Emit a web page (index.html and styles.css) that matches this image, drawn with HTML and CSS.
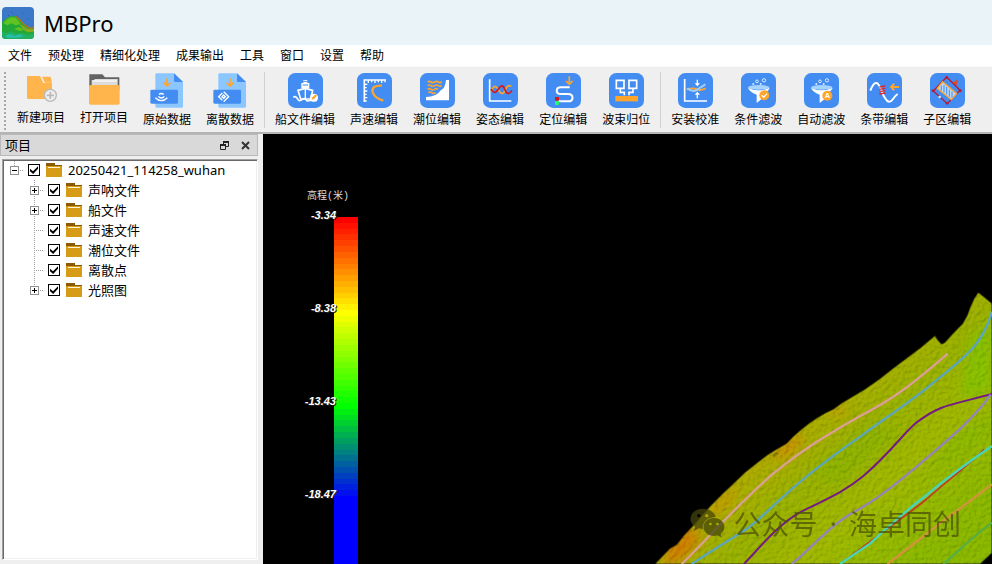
FILE: index.html
```html
<!DOCTYPE html>
<html lang="zh-CN">
<head>
<meta charset="utf-8">
<title>MBPro</title>
<link rel="stylesheet" href="styles.css">
</head>
<body>
<header class="titlebar">
  <svg class="app-icon" viewBox="0 0 96 96" aria-hidden="true">
    <defs><clipPath id="appclip"><rect width="96" height="96" rx="12"/></clipPath></defs>
    <g clip-path="url(#appclip)">
      <rect width="96" height="96" fill="#3c78c8"/>
      <path d="M28 14l3 3M60 16l3 3M44 26l3 3M78 34l3 3M18 24l3 3" stroke="#2a5ca6" stroke-width="3"/>
      <path d="M0 46L12 34 26 28 40 26 54 38 70 54 84 62 96 60V96H0z" fill="#22a836"/>
      <path d="M40 27L52 37 66 52 82 63 96 62" fill="none" stroke="#b87420" stroke-width="4"/>
      <path d="M4 48l12-12 12-5 10 0 10 8 8 12-14 4-14-6-12 6z" fill="#5fc421"/>
      <path d="M36 66l14-6 16 8-12 4z" fill="#5fc421"/>
      <path d="M52 50l14 8 12 8 18 0v8l-20 2-14-10z" fill="#86a91e"/>
      <path d="M0 74l14 4 16-6 14 8 20-2 12 6 20-6v18H0z" fill="#20b060"/>
      <path d="M10 86l14-5 14 6 14-5 14 6-22 4H16z" fill="#27bdb0"/>
    </g>
  </svg>
  <h1 class="app-name">MBPro</h1>
</header>

<nav class="menubar" aria-label="主菜单">
  <button class="menu">文件</button>
  <button class="menu">预处理</button>
  <button class="menu">精细化处理</button>
  <button class="menu">成果输出</button>
  <button class="menu">工具</button>
  <button class="menu">窗口</button>
  <button class="menu">设置</button>
  <button class="menu">帮助</button>
</nav>

<div class="toolbar" role="toolbar">
  <span class="grip"></span>
  <button class="tool tool-short">
    <svg class="tool-icon" viewBox="0 0 105 105" aria-hidden="true">
      <path d="M9 9H48L58 30H84V75a3 3 0 0 1-3 3H12a3 3 0 0 1-3-3z" fill="#ffb54c"/>
      <path d="M54 11H80L84 29H63z" fill="#ffb54c"/>
      <circle cx="79" cy="67" r="18" fill="#efefef" stroke="#b9b9b9" stroke-width="4"/>
      <path d="M79 56V78M68 67H90" stroke="#b9b9b9" stroke-width="5"/>
    </svg>
    新建项目
  </button>
  <button class="tool tool-short">
    <svg class="tool-icon" viewBox="0 0 105 105" aria-hidden="true">
      <path d="M7 4H46L54 13H97V50H7z" fill="#636363"/>
      <path d="M14 28L24 18H92V50H14z" fill="#dcdcdc"/>
      <path d="M14 24H90" stroke="#f5f5f5" stroke-width="5"/>
      <rect x="6" y="36" width="92" height="59" rx="5" fill="#ffb54c"/>
    </svg>
    打开项目
  </button>
  <button class="tool">
    <svg class="tool-icon" viewBox="0 0 105 105" aria-hidden="true">
      <path d="M20 1H72L99 27V100a4 4 0 0 1-4 4H20a4 4 0 0 1-4-4V5a4 4 0 0 1 4-4z" fill="#8cc6ff"/>
      <path d="M72 1L99 27H76a4 4 0 0 1-4-4z" fill="#438df2"/>
      <path d="M51 16V38M41 29L51 39 61 29" fill="none" stroke="#ffa52c" stroke-width="5"/>
      <rect x="1" y="50" width="83" height="42" rx="4" fill="#438df2"/>
      <path d="M27 64Q34 59 41 64M16 74Q34 92 52 74M25 70Q34 80 43 70" fill="none" stroke="#fff" stroke-width="4"/>
    </svg>
    原始数据
  </button>
  <button class="tool">
    <svg class="tool-icon" viewBox="0 0 105 105" aria-hidden="true">
      <path d="M20 1H72L99 27V100a4 4 0 0 1-4 4H20a4 4 0 0 1-4-4V5a4 4 0 0 1 4-4z" fill="#8cc6ff"/>
      <path d="M72 1L99 27H76a4 4 0 0 1-4-4z" fill="#438df2"/>
      <path d="M51 16V38M41 29L51 39 61 29" fill="none" stroke="#ffa52c" stroke-width="5"/>
      <rect x="1" y="50" width="83" height="42" rx="4" fill="#438df2"/>
      <path d="M28 60L17 71 28 82M36 60L47 71 36 82M32 56l5 5M32 86l5-5M32 66l5 5-5 5-5-5z" fill="none" stroke="#fff" stroke-width="4"/>
    </svg>
    离散数据
  </button>
  <span class="sep"></span>
  <button class="tool">
    <svg class="tool-icon" viewBox="0 0 105 105" aria-hidden="true">
      <rect width="105" height="105" rx="22" fill="#438df2"/>
      <path d="M46 21H58V30H64V46H40V30H46z" fill="#fff"/>
      <path d="M44 36H60M45 25H59" stroke="#438df2" stroke-width="3"/>
      <path d="M30 52L52 46 74 52 68 78H38z" fill="none" stroke="#fff" stroke-width="5"/>
      <path d="M52 47V78" stroke="#fff" stroke-width="4"/>
      <path d="M16 73Q23 67 28 77T42 80 54 80 66 82H86" fill="none" stroke="#fff" stroke-width="5"/>
      <circle cx="78" cy="74" r="12" fill="#fff"/>
      <path d="M71 80l2-7 10-9 4 4-9 10z" fill="#ffa52c"/>
    </svg>
    船文件编辑
  </button>
  <button class="tool">
    <svg class="tool-icon" viewBox="0 0 105 105" aria-hidden="true">
      <rect width="105" height="105" rx="22" fill="#438df2"/>
      <path d="M22 87V21H87" fill="none" stroke="#fff" stroke-width="5"/>
      <path d="M34 22v8M44 22v6M54 22v8M64 22v6M74 22v8M84 22v6M23 34h8M23 44h6M23 54h8M23 64h6M23 74h8M23 84h6" stroke="#fff" stroke-width="4"/>
      <path d="M75 38Q42 36 47 58Q54 76 79 83" fill="none" stroke="#ffa52c" stroke-width="7"/>
    </svg>
    声速编辑
  </button>
  <button class="tool">
    <svg class="tool-icon" viewBox="0 0 105 105" aria-hidden="true">
      <rect width="105" height="105" rx="22" fill="#438df2"/>
      <path d="M18 72Q50 72 62 52Q76 46 78 21H87V82H18z" fill="#fff"/>
      <path d="M23 27q5-4 10 0t11 0 11 0 10-1M23 38q5-4 10 0t11 0 11 0 10-1M23 49q5-4 10 0t11 0 10 0M25 59q5-4 10 0t12 0" fill="none" stroke="#ffa52c" stroke-width="5"/>
    </svg>
    潮位编辑
  </button>
  <button class="tool">
    <svg class="tool-icon" viewBox="0 0 105 105" aria-hidden="true">
      <rect width="105" height="105" rx="22" fill="#438df2"/>
      <path d="M20 19V84H85" fill="none" stroke="#fff" stroke-width="5"/>
      <path d="M24 56Q34 28 46 50T66 52T85 40" fill="none" stroke="#ffa52c" stroke-width="5"/>
      <path d="M24 48Q34 68 46 48T66 50T87 52" fill="none" stroke="#d4181f" stroke-width="5"/>
    </svg>
    姿态编辑
  </button>
  <button class="tool">
    <svg class="tool-icon" viewBox="0 0 105 105" aria-hidden="true">
      <rect width="105" height="105" rx="22" fill="#438df2"/>
      <path d="M71 43H45C28 43 28 63 45 63H66C84 63 84 85 66 85H36" fill="none" stroke="#fff" stroke-width="6"/>
      <path d="M70 10V33M60 24L70 34 80 24" fill="none" stroke="#ffa52c" stroke-width="5"/>
      <rect x="27" y="72" width="12" height="11" fill="#d4181f"/>
      <rect x="27" y="84" width="12" height="12" fill="#28f07a"/>
    </svg>
    定位编辑
  </button>
  <button class="tool">
    <svg class="tool-icon" viewBox="0 0 105 105" aria-hidden="true">
      <rect width="105" height="105" rx="22" fill="#438df2"/>
      <path d="M22 22H45V46H22zM60 22H83V46H60zM34 46V58H46V67M72 46V58H60V67" fill="none" stroke="#fff" stroke-width="5"/>
      <rect x="19" y="69" width="68" height="16" fill="#ffa52c"/>
    </svg>
    波束归位
  </button>
  <span class="sep"></span>
  <button class="tool">
    <svg class="tool-icon" viewBox="0 0 105 105" aria-hidden="true">
      <rect width="105" height="105" rx="22" fill="#438df2"/>
      <path d="M20 18V84H87" fill="none" stroke="#fff" stroke-width="5"/>
      <path d="M26 50Q46 44 56 49T83 46" fill="none" stroke="#ffa52c" stroke-width="6"/>
      <path d="M28 46Q44 60 58 50T82 34" fill="none" stroke="#9ccfff" stroke-width="6"/>
      <path d="M58 20V34M58 76V62" stroke="#fff" stroke-width="4"/>
      <path d="M50 31H66L58 40zM50 65H66L58 56z" fill="#fff"/>
    </svg>
    安装校准
  </button>
  <button class="tool">
    <svg class="tool-icon" viewBox="0 0 105 105" aria-hidden="true">
      <rect width="105" height="105" rx="22" fill="#438df2"/>
      <path d="M21 44Q52 60 86 44Q82 56 62 65V78L47 90V65Q25 56 21 44z" fill="#fff"/>
      <ellipse cx="53" cy="43" rx="32" ry="7" fill="#a7d4ff"/>
      <circle cx="48" cy="25" r="4" fill="none" stroke="#d8ebff" stroke-width="3"/>
      <circle cx="69" cy="22" r="5" fill="none" stroke="#d8ebff" stroke-width="3"/>
      <circle cx="59" cy="33" r="3" fill="#d8ebff"/><circle cx="37" cy="33" r="3" fill="#d8ebff"/>
      <circle cx="70" cy="67" r="15" fill="#ffa52c"/>
      <path d="M62 67L68 73 78 62" fill="none" stroke="#fff" stroke-width="4"/>
    </svg>
    条件滤波
  </button>
  <button class="tool">
    <svg class="tool-icon" viewBox="0 0 105 105" aria-hidden="true">
      <rect width="105" height="105" rx="22" fill="#438df2"/>
      <path d="M21 44Q52 60 86 44Q82 56 62 65V78L47 90V65Q25 56 21 44z" fill="#fff"/>
      <ellipse cx="53" cy="43" rx="32" ry="7" fill="#a7d4ff"/>
      <circle cx="48" cy="25" r="4" fill="none" stroke="#d8ebff" stroke-width="3"/>
      <circle cx="69" cy="22" r="5" fill="none" stroke="#d8ebff" stroke-width="3"/>
      <circle cx="59" cy="33" r="3" fill="#d8ebff"/><circle cx="37" cy="33" r="3" fill="#d8ebff"/>
      <circle cx="70" cy="68" r="15" fill="#ffa52c"/>
      <text class="badge-letter" x="70" y="76" text-anchor="middle">A</text>
    </svg>
    自动滤波
  </button>
  <button class="tool">
    <svg class="tool-icon" viewBox="0 0 105 105" aria-hidden="true">
      <rect width="105" height="105" rx="22" fill="#438df2"/>
      <path d="M10 53Q23 20 34 34C44 44 44 62 54 75Q66 96 78 78Q84 68 92 63" fill="none" stroke="#fff" stroke-width="6"/>
      <path d="M37 42l18-3M37 49l18-3M37 56l18-3M37 63l18-3" stroke="#e0262a" stroke-width="4"/>
      <path d="M96 42H74M82 32L72 42 82 52" fill="none" stroke="#ffa52c" stroke-width="6"/>
    </svg>
    条带编辑
  </button>
  <button class="tool">
    <svg class="tool-icon" viewBox="0 0 105 105" aria-hidden="true">
      <rect width="105" height="105" rx="22" fill="#438df2"/>
      <path d="M50 12L90 52 52 92 10 54z" fill="none" stroke="#b51c30" stroke-width="4"/>
      <path d="M38 26L80 62 64 80 22 46z" fill="#b9d8fa" stroke="#ffa52c" stroke-width="4"/>
      <path d="M34 38V52M42 36V58M50 42V64M58 50V71M66 56V74" stroke="#438df2" stroke-width="3"/>
      <path d="M68 30L84 18 80 36z" fill="#e0462a"/>
      <path d="M50 8l5 5-5 5-5-5zM9 48l5 5-5 5-5-5zM91 48l5 5-5 5-5-5zM51 86l5 5-5 5-5-5z" fill="#b51c30"/>
      <circle cx="29" cy="72" r="4" fill="#cfe4fb"/>
    </svg>
    子区编辑
  </button>
</div>

<main class="workspace">
  <aside class="dock">
    <div class="dock-head">
      <h2 class="dock-title">项目</h2>
      <button class="dock-btn" aria-label="浮动">
        <svg viewBox="0 0 9 9"><path d="M3.500 3V1.500H8.500V5.500H6M.5 4.500H5.500V8.500H.5z" fill="none" stroke="#222"/><path d="M3 1H9M0 4H6" stroke="#222" stroke-width="2"/></svg>
      </button>
      <button class="dock-btn" aria-label="关闭">
        <svg viewBox="0 0 9 9"><path d="M1 1L8 8M8 1L1 8" stroke="#333" stroke-width="2"/></svg>
      </button>
    </div>
    <div class="tree">
      <div class="row root">
        <button class="twist open" aria-label="折叠"></button>
        <label class="node"><input type="checkbox" checked><span class="folder"></span>20250421_114258_wuhan</label>
      </div>
      <ul class="branch">
        <li class="row"><button class="twist" aria-label="展开"></button><label class="node"><input type="checkbox" checked><span class="folder"></span>声呐文件</label></li>
        <li class="row"><button class="twist" aria-label="展开"></button><label class="node"><input type="checkbox" checked><span class="folder"></span>船文件</label></li>
        <li class="row"><span class="leaf"></span><label class="node"><input type="checkbox" checked><span class="folder"></span>声速文件</label></li>
        <li class="row"><span class="leaf"></span><label class="node"><input type="checkbox" checked><span class="folder"></span>潮位文件</label></li>
        <li class="row"><span class="leaf"></span><label class="node"><input type="checkbox" checked><span class="folder"></span>离散点</label></li>
        <li class="row"><button class="twist" aria-label="展开"></button><label class="node"><input type="checkbox" checked><span class="folder"></span>光照图</label></li>
      </ul>
    </div>
  </aside>

  <section class="viewport">
    <svg class="terrain" viewBox="0 0 1026 852" aria-hidden="true">
      <defs>
        <clipPath id="land"><path d="M16 852L60 806 80 795 104 765 130 737 152 712 180 680 215 645 250 612 285 578 320 550 350 527 375 511 410 491 430 470 455 448 478 430 500 415 525 400 550 388 575 370 600 355 645 328 690 297 730 265 770 235 812 204 855 168 862 180 875 193 885 188 910 160 938 132 952 108 960 85 972 58 985 38 1005 54 1026 72V818L990 852z"/></clipPath>
        <linearGradient id="ground" x1="230" y1="560" x2="640" y2="1000" gradientUnits="userSpaceOnUse">
          <stop offset="0" stop-color="#b4a000"/><stop offset=".14" stop-color="#a8ac00"/><stop offset=".34" stop-color="#98b000"/><stop offset=".6" stop-color="#9fb600"/><stop offset="1" stop-color="#8ab600"/>
        </linearGradient>
        <filter id="soft" x="-50%" y="-50%" width="200%" height="200%"><feGaussianBlur stdDeviation="16"/></filter>
        <filter id="relief" x="0" y="0" width="100%" height="100%" color-interpolation-filters="sRGB">
          <feTurbulence type="fractalNoise" baseFrequency=".08" numOctaves="3" seed="8" result="n"/>
          <feDiffuseLighting in="n" surfaceScale="5" diffuseConstant=".6" lighting-color="#fff"><feDistantLight azimuth="225" elevation="58"/></feDiffuseLighting>
        </filter>
      </defs>
      <g clip-path="url(#land)">
        <rect width="1026" height="852" fill="url(#ground)"/>
        <g filter="url(#soft)">
          <ellipse cx="415" cy="502" rx="55" ry="20" fill="#c88f00" transform="rotate(-38 415 502)"/>
          <ellipse cx="562" cy="394" rx="24" ry="14" fill="#c29a00"/>
          <ellipse cx="95" cy="800" rx="70" ry="30" fill="#cc7b00" transform="rotate(-45 95 800)"/>
          <ellipse cx="215" cy="672" rx="60" ry="14" fill="#c29400" transform="rotate(-42 215 672)"/>
          <path d="M960 180L1026 120V330L930 360z" fill="#86bd00"/>
          <path d="M480 580L660 440 760 450 560 620z" fill="#8eb000"/>
          <path d="M900 480L1026 390V480L820 600z" fill="#8cb600"/>
        </g>
        <rect class="relief" width="1026" height="852" filter="url(#relief)"/>
        <path d="M370 530q8-14 14-8" stroke="#746e00" stroke-width="6" fill="none"/>
      </g>
      <g class="tracks">
        <path stroke="#d99f96" d="M95 852C180 770 255 680 370 580C450 515 520 470 640 403C740 350 790 310 893 221"/>
        <path stroke="#5ca5bd" d="M125 852C180 815 230 785 290 747C330 718 370 675 420 632C500 560 560 520 640 463C740 390 800 352 850 308C950 228 1000 190 1026 95"/>
        <path stroke="#741a85" stroke-width="6" d="M282 852C340 790 390 730 450 697C520 660 570 645 640 588C720 520 760 460 800 427C870 375 890 378 1026 342"/>
        <path stroke="#9484b8" d="M425 852C480 810 530 745 600 703C680 660 740 610 800 560C880 490 960 430 1022 344"/>
        <path stroke="#c33a24" stroke-width="5" d="M575 849L660 785C740 725 790 690 830 657C900 595 950 560 1003 508"/>
        <path stroke="#48d4b5" d="M570 852L660 791C740 715 790 675 830 645C900 585 950 550 1026 498"/>
        <path stroke="#d0953a" d="M712 852C790 795 850 742 920 693L1026 613"/>
        <path stroke="#56ae45" d="M880 852C940 800 980 760 1026 728"/>
        <path stroke="#9bc800" stroke-width="3" d="M965 295L1008 250"/>
      </g>
    </svg>
    <div class="watermark">
      <svg viewBox="0 0 104 90" aria-hidden="true">
        <path fill-rule="evenodd" d="M38 2C16 2 1 16 1 33c0 10 6 18 14 24l-4 12 15-8 12 2c-2-20 14-36 39-36C73 12 56 2 38 2zM26 18a5 5 0 1 1 0 10 5 5 0 1 1 0-10zM50 18a5 5 0 1 1 0 10 5 5 0 1 1 0-10z"/>
        <path fill-rule="evenodd" d="M72 30c-18 0-32 12-32 27s14 27 32 27l10-2 13 7-4-11c8-5 12-12 12-21 0-15-14-27-31-27zM61 44a4 4 0 1 1 0 8 4 4 0 1 1 0-8zM82 44a4 4 0 1 1 0 8 4 4 0 1 1 0-8z"/>
      </svg>
      <span>公众号</span><span class="dot">·</span><span>海卓同创</span>
    </div>
    <div class="legend">
      <div class="legend-title">高程(米)</div>
      <div class="legend-body">
        <div class="legend-labels"><span>-3.34</span><span>-8.38</span><span>-13.43</span><span>-18.47</span></div>
        <div class="legend-bar" id="bar"></div>
      </div>
    </div>
  </section>
</main>
<script src="legend.js"></script>
</body>
</html>
```
FILE: styles.css
```css
* { box-sizing: border-box; }
body {
  margin: 0;
  height: 100vh;
  display: flex;
  flex-direction: column;
  overflow: hidden;
  background: #efefef;
  color: #000;
  font-family: "Noto Sans", "Noto Sans CJK SC", sans-serif;
  font-size: 12px;
}
button {
  margin: 0;
  padding: 0;
  border: 0;
  background: none;
  color: inherit;
  font: inherit;
}
h1, h2 { margin: 0; font-weight: 400; }

.titlebar {
  flex: none;
  display: flex;
  align-items: center;
  gap: 10px;
  height: 45px;
  padding: 0 2px;
  background: #eaf4f8;
}
.app-icon { width: 32px; height: 32px; }
.app-name { font-size: 22px; line-height: 32px; }

.menubar {
  flex: none;
  display: flex;
  height: 21px;
  background: #fff;
}
.menu { padding: 0 8px; line-height: 20px; white-space: nowrap; }

.toolbar {
  flex: none;
  display: flex;
  height: 68px;
  padding: 5px 4px 0;
  border-top: 1px solid #fbfbfb;
  border-bottom: 2px solid #b4b4b4;
}
.grip {
  width: 2px;
  height: 58px;
  margin-right: 3px;
  background: repeating-linear-gradient(#a8a8a8 0 2px, #efefef 2px 4px);
}
.sep {
  width: 1px;
  height: 56px;
  margin: 0 2px 0 3px;
  background: #cfcfcf;
}
.tool {
  flex: none;
  display: flex;
  flex-direction: column;
  align-items: center;
  gap: 3px;
  height: 57px;
  padding: 1px 7px 0 8px;
  line-height: 18px;
  white-space: nowrap;
}
.tool-short { gap: 1px; }
.tool-icon { flex: none; display: block; width: 35px; height: 35px; }
.badge-letter { fill: #fff; font: 700 22px "Liberation Sans", sans-serif; }

.workspace { flex: 1; display: flex; min-height: 0; }
.dock {
  flex: none;
  width: 263px;
  display: flex;
  flex-direction: column;
  padding: 0 5px 4px 0;
}
.dock-head {
  display: flex;
  align-items: center;
  gap: 12px;
  height: 22px;
  padding: 0 7px 0 4px;
  border: 1px solid #b9b9b9;
  background: #d9d9d9;
}
.dock-title { flex: 1; font-size: 13px; line-height: 20px; }
.dock-btn { width: 9px; height: 9px; }
.dock-btn svg { display: block; width: 9px; height: 9px; }

.tree {
  flex: 1;
  margin: 3px 0 0 2px;
  border: 1px solid;
  border-color: #a0a0a0 #fff #fff #a0a0a0;
  box-shadow: inset 1px 1px #696969, inset -1px -1px #efefef;
  background: #fff;
  font-size: 13px;
  padding: 0 2px;
}
.branch {
  list-style: none;
  margin: 0 0 0 20px;
  padding: 0;
  background: repeating-linear-gradient(#a0a0a0 0 1px, transparent 1px 2px) 9px 0 / 1px 111px no-repeat;
}
.row { display: flex; align-items: center; height: 20px; }
.root { background: repeating-linear-gradient(transparent 0 1px, #a0a0a0 1px 2px) 9px 0 / 1px 6px no-repeat; }
.row::before { content: ""; width: 5px; }
.twist {
  width: 9px;
  height: 9px;
  border: 1px solid #919191;
  background:
    linear-gradient(#000, #000) center / 5px 1px no-repeat,
    linear-gradient(#000, #000) center / 1px 5px no-repeat,
    #fff;
}
.twist.open { background: linear-gradient(#000, #000) center / 5px 1px no-repeat, #fff; }
.leaf { width: 9px; height: 1px; background: repeating-linear-gradient(90deg, transparent 0 4px, #a0a0a0 4px 5px, transparent 5px 6px, #a0a0a0 6px 7px, transparent 7px 8px, #a0a0a0 8px 9px); }
.node { display: flex; align-items: center; line-height: 20px; white-space: nowrap; }
.node::before {
  content: "";
  width: 5px;
  height: 1px;
  margin-right: 4px;
  background: repeating-linear-gradient(90deg, transparent 0 1px, #a0a0a0 1px 2px);
}
.node input {
  appearance: none;
  width: 12px;
  height: 12px;
  margin: 0 6px 0 0;
  border: 1px solid #000;
  background: #fff;
}
.node input:checked::after {
  content: "";
  display: block;
  width: 10px;
  height: 10px;
  background: #000;
  clip-path: polygon(10% 38%, 40% 62%, 90% 12%, 90% 38%, 42% 90%, 10% 62%);
}
.folder {
  width: 16px;
  height: 14px;
  margin-right: 6px;
  background:
    linear-gradient(#fff3d0, #fff3d0) 2px 4px / 12px 1px no-repeat,
    linear-gradient(#d79c17, #d79c17) 0 3px / 16px 11px no-repeat,
    linear-gradient(#8a5a06, #8a5a06) 0 0 / 9px 3px no-repeat,
    linear-gradient(#8a5a06, #8a5a06) 0 2px / 16px 2px no-repeat;
}

.viewport {
  position: relative;
  flex: 1;
  min-width: 0;
  overflow: hidden;
  background: #000;
}
.terrain { position: absolute; right: 0; bottom: 0; width: 342px; height: 284px; }
.relief { mix-blend-mode: soft-light; opacity: .8; }
.tracks { fill: none; stroke-width: 7; }
.watermark {
  position: absolute;
  right: 31px;
  bottom: 21px;
  display: flex;
  align-items: center;
  gap: 12px;
  color: #4c5206;
  font-family: "Noto Sans CJK SC", sans-serif;
  font-size: 28px;
  font-weight: 400;
  line-height: 40px;
  opacity: .75;
}
.watermark .dot { font-family: "Noto Sans", sans-serif; }
.watermark svg { width: 35px; height: 30px; margin-right: -4px; fill: #44460a; }

.legend {
  position: relative;
  width: 100px;
  padding: 55px 0 0 42px;
  color: #fff;
}
.legend-title {
  margin-left: 2px;
  color: #ddd;
  font-family: "Liberation Mono", "Noto Sans CJK SC", monospace;
  font-size: 10px;
  line-height: 16px;
  white-space: nowrap;
}
.legend-body { display: flex; padding-top: 4px; }
.legend-labels {
  z-index: 1;
  width: 31px;
  margin-right: -2px;
  font: italic 700 11px/12px "Liberation Sans", sans-serif;
}
.legend-labels span { display: flex; justify-content: flex-end; height: 93px; text-shadow: 1px 1px #222; }
.legend-bar { display: flex; flex-direction: column; width: 24px; height: 372px; margin-top: 8px; }
.band { flex: 1; }
```
FILE: legend.js
```js
// Elevation ramp: red, yellow, green, blue, 16 bands between stops.
const stops = [[255, 0, 0], [255, 255, 0], [0, 255, 0], [0, 0, 255], [0, 0, 255]];
const bar = document.getElementById("bar");
for (let i = 0; i < 64; i++) {
  const k = Math.floor(i / 16);
  const t = (i % 16) / 16;
  const rgb = stops[k].map((v, c) => Math.round(v + (stops[k + 1][c] - v) * t));
  const band = document.createElement("div");
  band.className = "band";
  band.style.background = `rgb(${rgb})`;
  bar.appendChild(band);
}
```
